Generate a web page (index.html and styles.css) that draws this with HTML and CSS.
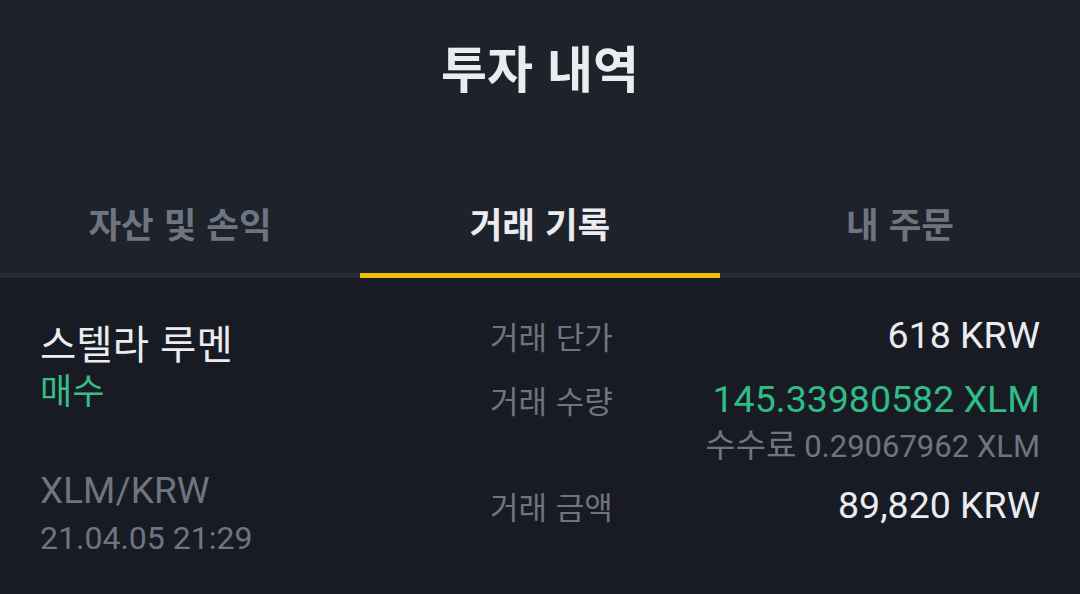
FILE: index.html
```html
<!DOCTYPE html>
<html lang="ko">
<head>
<meta charset="utf-8">
<link rel="stylesheet" href="styles.css">
</head>
<body>
<div class="page">
  <header class="header">
    <h1 class="title">투자 내역</h1>
    <nav class="tabs">
      <div class="tab">자산 및 손익</div>
      <div class="tab active">거래 기록</div>
      <div class="tab">내 주문</div>
    </nav>
  </header>
  <main class="content">
    <section class="left">
      <div class="coin">스텔라 루멘</div>
      <div class="side">매수</div>
      <div class="pair">XLM/KRW</div>
      <div class="date">21.04.05 21:29</div>
    </section>
    <section class="right">
      <div class="row r1">
        <span class="label">거래 단가</span>
        <span class="value">618 KRW</span>
      </div>
      <div class="row r2">
        <span class="label">거래 수량</span>
        <span class="value green">145.33980582 XLM</span>
      </div>
      <div class="fee"><span class="fee-label">수수료</span> 0.29067962 XLM</div>
      <div class="row r3">
        <span class="label">거래 금액</span>
        <span class="value">89,820 KRW</span>
      </div>
    </section>
  </main>
</div>
</body>
</html>
```

FILE: styles.css
```css
* { box-sizing: border-box; }
html, body {
  margin: 0;
  padding: 0;
  background: #181b24;
}
body {
  width: 1080px;
  height: 594px;
  overflow: hidden;
  font-family: Roboto, "Noto Sans CJK KR", sans-serif;
}
.page {
  width: 1080px;
  height: 594px;
  display: flex;
  flex-direction: column;
}
.header {
  background: #1e222b;
  height: 278px;
  display: flex;
  flex-direction: column;
}
.title {
  margin: 0;
  height: 134px;
  display: flex;
  align-items: center;
  justify-content: center;
  font-family: "Noto Sans CJK KR", sans-serif;
  font-weight: 700;
  font-size: 50px;
  line-height: 60px;
  color: #eaecef;
  padding-bottom: 2px;
}
.tabs {
  display: flex;
  height: 144px;
}
.tab {
  flex: 1;
  display: flex;
  justify-content: center;
  padding-top: 64px;
  line-height: 50px;
  font-family: "Noto Sans CJK KR", sans-serif;
  font-weight: 700;
  font-size: 35.5px;
  color: #6f7580;
  border-bottom: 5px solid #262a33;
  height: 144px;
}
.tab.active {
  color: #eaecef;
  border-bottom-color: #f0b90b;
}
.content {
  flex: 1;
  display: flex;
  padding: 0 40px;
}
.left {
  width: 450px;
  display: flex;
  flex-direction: column;
  padding-top: 40px;
}
.coin {
  font-family: "Noto Sans CJK KR", sans-serif;
  font-size: 39.5px;
  line-height: 46px;
  color: #eaecef;
  margin-top: 1px;
}
.side {
  font-family: "Noto Sans CJK KR", sans-serif;
  font-size: 35px;
  line-height: 42px;
  margin-top: 3px;
  color: #37bd86;
}
.pair {
  font-size: 37px;
  line-height: 48px;
  margin-top: 57px;
  color: #6f7580;
}
.date {
  font-size: 32px;
  line-height: 44px;
  margin-top: 1px;
  color: #6f7580;
}
.right {
  flex: 1;
  display: flex;
  flex-direction: column;
  padding-top: 33px;
}
.row {
  display: flex;
  justify-content: space-between;
  align-items: center;
  height: 48px;
}
.r2 { margin-top: 16px; }
.r3 { margin-top: 14px; }
.label {
  font-family: "Noto Sans CJK KR", sans-serif;
  font-size: 31px;
  color: #6f7580;
}
.value {
  font-size: 37.5px;
  color: #eaecef;
}
.value.green { color: #2fbd85; }
.fee {
  text-align: right;
  font-size: 31px;
  line-height: 40px;
  color: #6f7580;
}
.fee-label {
  font-family: "Noto Sans CJK KR", sans-serif;
  font-size: 33px;
}
```
